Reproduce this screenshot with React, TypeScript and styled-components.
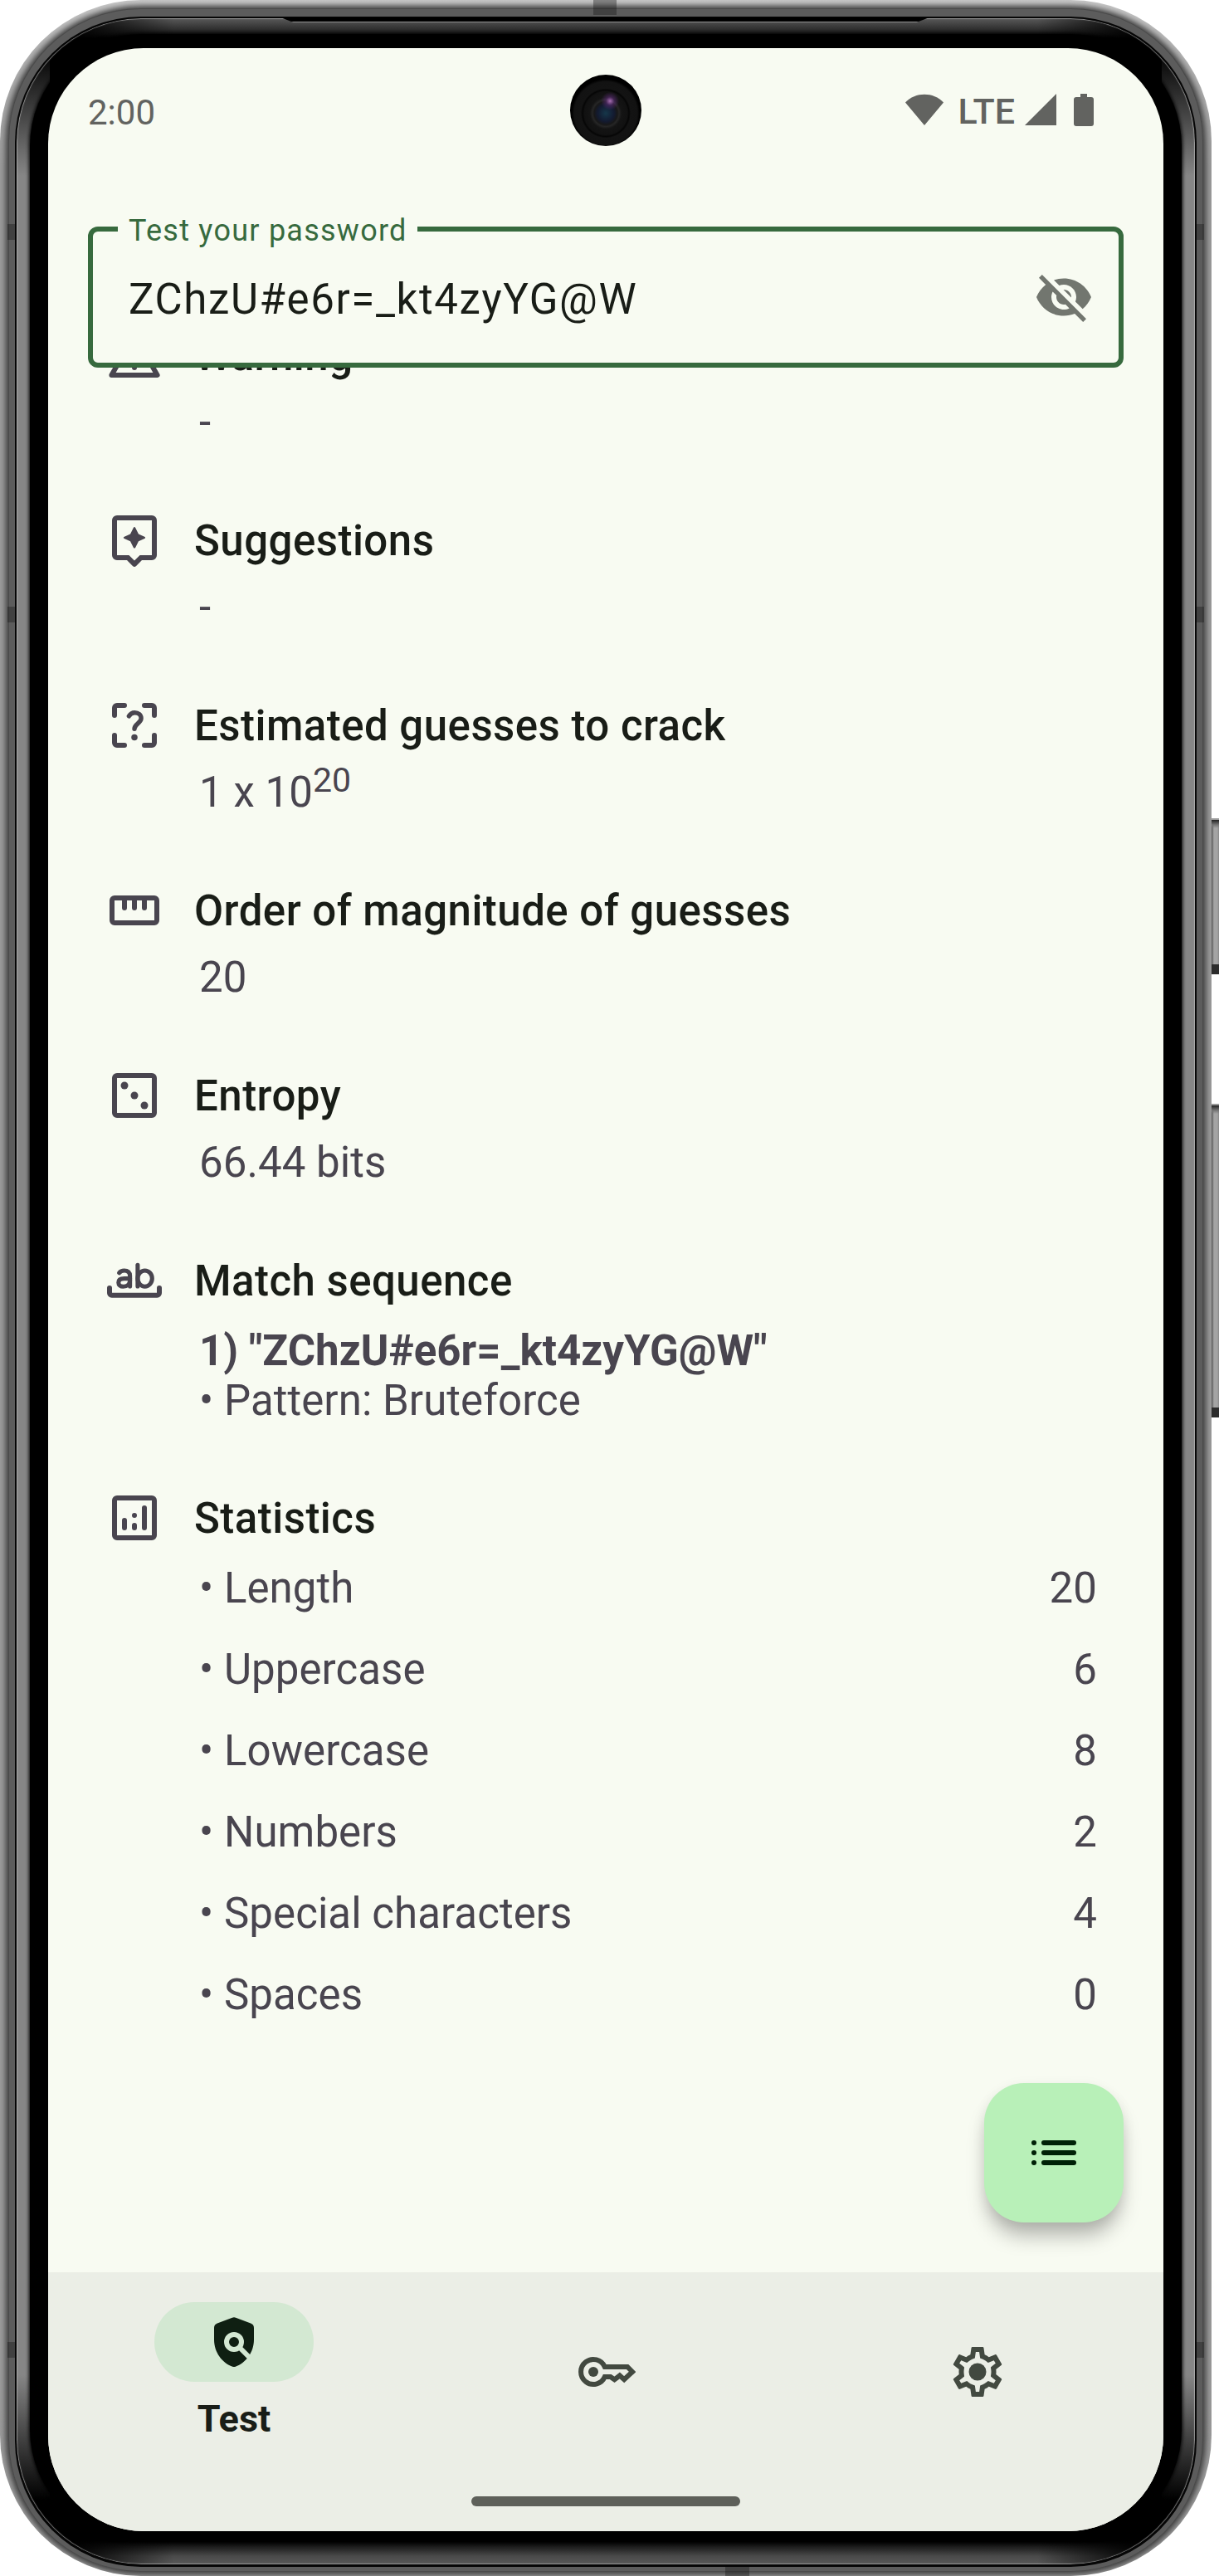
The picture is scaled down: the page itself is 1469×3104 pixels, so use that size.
import React from "react";
import styled, { createGlobalStyle } from "styled-components";

const GlobalStyle = createGlobalStyle`
  body { margin: 0; background: #fff; }
  * { box-sizing: border-box; }
`;

const surface = "#f8fbf2";
const muted = "#49454f";

/* ---------- device ---------- */

const Stage = styled.div`
  position: relative;
  width: 1469px;
  height: 3104px;
  overflow: hidden;
  font-family: Roboto, "Noto Sans", sans-serif;
`;

const Rim = styled.div`
  position: relative;
  width: 1460px;
  height: 3104px;
  padding: 10px 10px 5px;
  border-radius: 170px;
  overflow: hidden;
  background: linear-gradient(180deg, #c8c8c8 0, #b4b4b4 60px, #9c9c9c 200px, #9c9c9c 2900px, #a0a0a0 100%);
`;

const Band = styled.div`
  height: 100%;
  padding: 10px 8px 6px;
  border-radius: 160px;
  background: #5c5c5c;
  box-shadow: 0 0 7px 3px #3c3c3c, inset 0 0 0 1px #4a4a4a;
`;

const Gap = styled.div`
  height: 100%;
  padding: 2px 2px 3px;
  border-radius: 152px;
  background: #060606;
`;

const Chrome = styled.div`
  height: 100%;
  padding: 19px 16px 28px;
  border-radius: 150px;
  background:
    linear-gradient(180deg, transparent 40px, #868686 190px, #868686 2840px, transparent 2990px) left / 40px 100% no-repeat,
    linear-gradient(180deg, transparent 40px, #868686 190px, #868686 2840px, transparent 2990px) right / 40px 100% no-repeat,
    linear-gradient(90deg, #000 60px, transparent 190px, transparent 1230px, #000 1360px),
    linear-gradient(180deg, #5a5a5a, #1c1c1c 19px, #000 24px) center top / 100% 24px no-repeat,
    linear-gradient(0deg, #585858, #4a4a4a 10px, #000 28px) center bottom / 100% 30px no-repeat,
    #000;
  box-shadow: inset 0 0 1px 1px rgba(190, 190, 190, 0.65);
`;

const Bezel = styled.div`
  height: 100%;
  padding: 17px 22px 12px;
  border-radius: 135px;
  background: #000;
  box-shadow: 0 0 4px 1px #000;
`;

const Screen = styled.div`
  position: relative;
  display: flex;
  flex-direction: column;
  height: 100%;
  border-radius: 115px;
  overflow: hidden;
  background: ${surface};
`;

const SpeakerSlot = styled.div`
  position: absolute;
  left: 338px;
  top: 21px;
  width: 782px;
  height: 6px;
  background: linear-gradient(180deg, #000 5px, #909090 5px);
  clip-path: polygon(0 0, 100% 0, 98% 100%, 2% 100%);
`;

const AntennaMark = styled.div<{ $x: number; $y: number; $w: number; $h: number }>`
  position: absolute;
  left: ${(p) => p.$x}px;
  top: ${(p) => p.$y}px;
  width: ${(p) => p.$w}px;
  height: ${(p) => p.$h}px;
  background: rgba(20, 20, 20, 0.38);
`;

const SideKey = styled.div<{ $y: number; $h: number }>`
  position: absolute;
  left: 1460px;
  top: ${(p) => p.$y}px;
  width: 9px;
  height: ${(p) => p.$h}px;
  border-top: 2px solid #9a9a9a;
  border-bottom: 12px solid #2c2c2c;
  background: linear-gradient(180deg, #222 0, #777 6px, transparent 10px),
    linear-gradient(90deg, #555, #a4a4a4 3px, #a4a4a4 7px, #888);
`;

/* ---------- status bar ---------- */

const StatusBar = styled.header`
  display: flex;
  align-items: center;
  justify-content: space-between;
  height: 74px;
  margin-top: 38px;
  padding: 0 84px 0 48px;
  color: #626360;
`;

const Clock = styled.span`
  font-size: 42px;
  line-height: 74px;
  padding-top: 5px;
`;

const StatusIcons = styled.div`
  display: flex;
  align-items: center;
`;

const NetworkType = styled.span`
  margin: 0 12px 0 18px;
  padding-top: 1px;
  font-size: 43px;
  font-weight: 500;
  line-height: 74px;
`;

const CameraLens = styled.div`
  position: absolute;
  left: 629px;
  top: 32px;
  width: 86px;
  height: 86px;
  border-radius: 50%;
  background:
    radial-gradient(circle at 56% 37%, rgba(200, 130, 215, 0.8) 0, rgba(90, 45, 115, 0.6) 5px, transparent 11px),
    radial-gradient(circle at 50% 54%, #16374a 0, #131a30 10px, #181818 14px, #262626 16px, #141414 19px, #111 26px, #050505 28px, #131313 30px, #121212 38px, #000 41px);
`;

/* ---------- password field ---------- */

const Field = styled.div`
  position: relative;
  display: flex;
  flex: none;
  align-items: center;
  justify-content: space-between;
  height: 170px;
  margin: 103px 48px 0;
  padding: 0 30px 0 43px;
  border: 6px solid #376a3e;
  border-radius: 12px;
`;

const FieldLabel = styled.label`
  position: absolute;
  left: 30px;
  top: -25px;
  padding: 0 12px 0 13px;
  background: ${surface};
  color: #376a3e;
  font-size: 36px;
  line-height: 48px;
  letter-spacing: 1.25px;
  white-space: nowrap;
`;

const FieldValue = styled.span`
  padding-top: 6px;
  color: #191d17;
  font-size: 51px;
  line-height: 72px;
  letter-spacing: 1.6px;
  white-space: nowrap;
`;

/* ---------- result list ---------- */

const Results = styled.main`
  flex: 1;
  min-height: 0;
  overflow: hidden;
  padding: 0 80px 0 68px;
`;

const ScrolledList = styled.div`
  margin-top: -51px;
`;

const Section = styled.section<{ $height: number }>`
  height: ${(p) => p.$height}px;
`;

const SectionHead = styled.div`
  display: flex;
  align-items: center;
  gap: 36px;
  height: 72px;
  color: ${muted};
`;

const SectionTitle = styled.h2`
  margin: 0;
  padding-top: 2px;
  color: #191d17;
  font-size: 51px;
  font-weight: 500;
  line-height: 72px;
  letter-spacing: 0.47px;
  white-space: nowrap;
`;

const SectionBody = styled.div<{ $gap?: number }>`
  padding: ${(p) => p.$gap ?? 15}px 0 0 114px;
  color: ${muted};
  font-size: 51px;
  line-height: 60px;
  letter-spacing: 0.06px;
`;

const Exponent = styled.span`
  position: relative;
  top: -18px;
  font-size: 41px;
  line-height: 1;
`;

const Strong = styled.div`
  font-weight: 700;
`;

const StatRow = styled.div`
  display: flex;
  justify-content: space-between;
  height: 98px;
`;

/* ---------- floating button and navigation ---------- */

const Fab = styled.button`
  position: absolute;
  left: 1128px;
  top: 2452px;
  display: grid;
  place-items: center;
  width: 168px;
  height: 168px;
  padding: 0;
  border: 0;
  border-radius: 48px;
  background: #b8f0b8;
  color: #002107;
  box-shadow: 0 20px 24px -4px rgba(0, 0, 0, 0.27), 0 4px 16px rgba(0, 0, 0, 0.07);
`;

const NavBar = styled.nav`
  flex: none;
  display: flex;
  flex-direction: column;
  align-items: center;
  height: 312px;
  background: #ebeee6;
`;

const NavItems = styled.div`
  display: flex;
  width: 100%;
  height: 240px;
`;

const NavItem = styled.div`
  flex: 1;
  display: flex;
  flex-direction: column;
  align-items: center;
  justify-content: center;
  color: #424940;
`;

const ActivePill = styled.div`
  display: grid;
  place-items: center;
  width: 192px;
  height: 96px;
  border-radius: 48px;
  background: #d3e8d2;
  color: #0f1f12;
`;

const NavLabel = styled.span`
  padding-top: 15px;
  margin-bottom: -3px;
  color: #191d17;
  font-size: 45px;
  font-weight: 700;
  line-height: 60px;
`;

const HomeHandle = styled.div`
  width: 324px;
  height: 12px;
  margin-top: 30px;
  border-radius: 6px;
  background: #5e605a;
`;

/* ---------- icons ---------- */

const IconSvg = styled.svg`
  flex: none;
  width: 72px;
  height: 72px;
`;

const Glyph = ({ children }: { children: React.ReactNode }) => (
  <IconSvg viewBox="0 0 24 24" fill="none" stroke="currentColor" strokeWidth="2" strokeLinecap="round" strokeLinejoin="round">
    {children}
  </IconSvg>
);

const Box = () => (
  <path stroke="none" fill="currentColor" fillRule="evenodd" d="M5 3h14a2 2 0 0 1 2 2v14a2 2 0 0 1-2 2H5a2 2 0 0 1-2-2V5a2 2 0 0 1 2-2ZM5 5v14h14V5Z" />
);

const WarningIcon = () => (
  <Glyph>
    <path d="M2.8 20 12 4l9.2 16Z" />
    <path d="M12 11v3" />
    <circle cx="12" cy="17" r="1" fill="currentColor" stroke="none" />
  </Glyph>
);

const AssistantIcon = () => (
  <Glyph>
    <path stroke="none" fill="currentColor" fillRule="evenodd" d="M5 2h14a2 2 0 0 1 2 2v14a2 2 0 0 1-2 2h-4l-2.3 2.3a1 1 0 0 1-1.4 0L9 20H5a2 2 0 0 1-2-2V4a2 2 0 0 1 2-2ZM5 4v14h4.8l2.2 2.2 2.2-2.2H19V4Z" />
    <path stroke="none" fill="currentColor" d="M11.6 7c.15-.4.65-.4.8 0l1.25 2.5 2.4 1.05c.45.2.45.6 0 .8l-2.4 1.05-1.25 2.5c-.15.4-.65.4-.8 0l-1.25-2.5-2.4-1.05c-.45-.2-.45-.6 0-.8l2.4-1.05Z" />
  </Glyph>
);

const GuessIcon = () => (
  <Glyph>
    <path d="M8 4H5a1 1 0 0 0-1 1v3M16 4h3a1 1 0 0 1 1 1v3M8 20H5a1 1 0 0 1-1-1v-3M16 20h3a1 1 0 0 0 1-1v-3" />
    <path strokeWidth="1.8" d="M9.8 8.3C10.3 7.4 11.1 6.9 12.1 6.9c1.5 0 2.6.9 2.6 2.3 0 1.9-2.7 2.3-2.7 4.2" />
    <circle cx="12" cy="16.8" r="1.25" fill="currentColor" stroke="none" />
  </Glyph>
);

const RulerIcon = () => (
  <Glyph>
    <path stroke="none" fill="currentColor" fillRule="evenodd" d="M4 6h16a2 2 0 0 1 2 2v8a2 2 0 0 1-2 2H4a2 2 0 0 1-2-2V8a2 2 0 0 1 2-2ZM4 8v8h16V8Z" />
    <path d="M8 8v3M12 8v3M16 8v3" />
  </Glyph>
);

const DiceIcon = () => (
  <Glyph>
    <Box />
    <g fill="currentColor" stroke="none">
      <circle cx="8" cy="8" r="1.5" />
      <circle cx="12" cy="12" r="1.5" />
      <circle cx="16" cy="16" r="1.5" />
    </g>
  </Glyph>
);

const WordIcon = () => (
  <Glyph>
    <path d="M2 15v2a.9.9 0 0 0 .9.9h18.2A.9.9 0 0 0 22 17v-2" />
    <g strokeWidth="1.7">
      <path d="M5.9 8.9c.5-.7 1.2-.9 2-.9 1.5 0 2.3.8 2.3 2.1v4.2" />
      <path d="M10.2 11.2H7.9c-1.4 0-2.3.5-2.3 1.6 0 1 .8 1.6 1.9 1.6 1.5 0 2.7-1 2.7-2.6" />
      <path d="M13.3 5.8v8.5" />
      <ellipse cx="16.2" cy="11.2" rx="2.9" ry="3.2" />
    </g>
  </Glyph>
);

const StatsIcon = () => (
  <Glyph>
    <Box />
    <path d="M8 13v3M12 15v1M16 8v8" />
    <circle cx="12" cy="11" r="1" fill="currentColor" stroke="none" />
  </Glyph>
);

const HiddenIcon = () => (
  <IconSvg viewBox="0 0 24 24" fill="#72766f">
    <path d="M12 7c2.76 0 5 2.24 5 5 0 .65-.13 1.26-.36 1.83l2.92 2.92c1.51-1.26 2.7-2.89 3.43-4.75-1.73-4.39-6-7.5-11-7.5-1.4 0-2.74.25-3.98.7l2.16 2.16C10.74 7.13 11.35 7 12 7zM2 4.27l2.28 2.28.46.46C3.08 8.3 1.78 10.02 1 12c1.73 4.39 6 7.5 11 7.5 1.55 0 3.03-.3 4.38-.84l.42.42L19.73 22 21 20.73 3.27 3 2 4.27zM7.53 9.8l1.55 1.55c-.05.21-.08.43-.08.65 0 1.66 1.34 3 3 3 .22 0 .44-.03.65-.08l1.55 1.55c-.67.33-1.41.53-2.2.53-2.76 0-5-2.24-5-5 0-.79.2-1.53.53-2.2zm4.31-.78l3.15 3.15.02-.16c0-1.66-1.34-3-3-3l-.17.01z" />
  </IconSvg>
);

const ListIcon = () => (
  <Glyph>
    <path d="M8 8h12M8 12h12M8 16h12M4 8h.01M4 12h.01M4 16h.01" />
  </Glyph>
);

const PolicyIcon = () => (
  <Glyph>
    <path stroke="none" fill="currentColor" d="M11.3 2.25a2 2 0 0 1 1.4 0l6 2.25A2 2 0 0 1 20 6.4v4.7c0 5.1-3.3 9.4-7.4 10.8a2 2 0 0 1-1.2 0C7.3 20.5 4 16.2 4 11.1V6.4a2 2 0 0 1 1.3-1.9Z" />
    <g stroke="#d3e8d2" strokeLinecap="butt">
      <circle cx="12" cy="12" r="3" />
      <path d="m14 14 5 5" />
    </g>
  </Glyph>
);

const KeyIcon = () => (
  <Glyph>
    <path strokeLinejoin="miter" d="M11.6 10h9.1l2 2-3.3 3.1-1.8-1.6-2.1 1.6-1.6-1.1h-2.3A5 5 0 1 1 11.6 10Z" />
    <circle cx="7" cy="12" r="2" fill="currentColor" stroke="none" />
  </Glyph>
);

const SettingsIcon = () => (
  <Glyph>
    <path
      stroke="none"
      fill="currentColor"
      d="M19.43 12.98c.04-.32.07-.64.07-.98 0-.34-.03-.66-.07-.98l2.11-1.65c.19-.15.24-.42.12-.64l-2-3.46c-.09-.16-.26-.25-.44-.25-.06 0-.12.01-.17.03l-2.49 1c-.52-.4-1.08-.73-1.69-.98l-.38-2.65C14.46 2.18 14.25 2 14 2h-4c-.25 0-.46.18-.49.42l-.38 2.65c-.61.25-1.17.59-1.69.98l-2.49-1c-.06-.02-.12-.03-.18-.03-.17 0-.34.09-.43.25l-2 3.46c-.13.22-.07.49.12.64l2.11 1.65c-.04.32-.07.65-.07.98 0 .33.03.66.07.98l-2.11 1.65c-.19.15-.24.42-.12.64l2 3.46c.09.16.26.25.44.25.06 0 .12-.01.17-.03l2.49-1c.52.4 1.08.73 1.69.98l.38 2.65c.03.24.24.42.49.42h4c.25 0 .46-.18.49-.42l.38-2.65c.61-.25 1.17-.59 1.69-.98l2.49 1c.06.02.12.03.18.03.17 0 .34-.09.43-.25l2-3.46c.12-.22.07-.49-.12-.64l-2.11-1.65zm-1.98-1.71c.04.31.05.52.05.73 0 .21-.02.43-.05.73l-.14 1.13.89.7 1.08.84-.7 1.21-1.27-.51-1.04-.42-.9.68c-.43.32-.84.56-1.25.73l-1.06.43-.16 1.13-.2 1.35h-1.4l-.19-1.35-.16-1.13-1.06-.43c-.43-.18-.83-.41-1.23-.71l-.91-.7-1.06.43-1.27.51-.7-1.21 1.08-.84.89-.7-.14-1.13c-.03-.31-.05-.54-.05-.74s.02-.43.05-.73l.14-1.13-.89-.7-1.08-.84.7-1.21 1.27.51 1.04.42.9-.68c.43-.32.84-.56 1.25-.73l1.06-.43.16-1.13.2-1.35h1.39l.19 1.35.16 1.13 1.06.43c.43.18.83.41 1.23.71l.91.7 1.06-.43 1.27-.51.7 1.21-1.07.85-.89.7.14 1.13z"
    />
    <circle cx="12" cy="12" r="3.5" fill="currentColor" stroke="none" />
  </Glyph>
);

const WifiIcon = () => (
  <svg width="46" height="40" viewBox="0 0 46 40" fill="currentColor">
    <path d="M0 10.500C12 -2.500 34 -2.500 46 10.500L23 38Z" />
  </svg>
);

const SignalIcon = () => (
  <svg width="38" height="40" viewBox="0 0 38 40" fill="currentColor">
    <path d="M0 38 38 0v38Z" />
  </svg>
);

const BatterySvg = styled.svg`
  width: 24px;
  height: 40px;
  margin-left: 21px;
`;

const BatteryIcon = () => (
  <BatterySvg viewBox="0 0 24 40" fill="currentColor">
    <path d="M8 0h8v4h5a3 3 0 0 1 3 3v29a3 3 0 0 1-3 3H3a3 3 0 0 1-3-3V7a3 3 0 0 1 3-3h5Z" />
  </BatterySvg>
);

/* ---------- data ---------- */

const stats: [string, number][] = [
  ["Length", 20],
  ["Uppercase", 6],
  ["Lowercase", 8],
  ["Numbers", 2],
  ["Special characters", 4],
  ["Spaces", 0],
];

const sections: { title: string; icon: React.ReactNode; height: number; gap?: number; body: React.ReactNode }[] = [
  { title: "Warning", icon: <WarningIcon />, height: 223, body: "-" },
  { title: "Suggestions", icon: <AssistantIcon />, height: 223, body: "-" },
  { title: "Estimated guesses to crack", icon: <GuessIcon />, height: 223, body: <>1 x 10<Exponent>20</Exponent></> },
  { title: "Order of magnitude of guesses", icon: <RulerIcon />, height: 223, body: "20" },
  { title: "Entropy", icon: <DiceIcon />, height: 223, body: "66.44 bits" },
  {
    title: "Match sequence",
    icon: <WordIcon />,
    height: 286,
    gap: 19,
    body: (
      <>
        <Strong>1) "ZChzU#e6r=_kt4zyYG@W"</Strong>
        <div>• Pattern: Bruteforce</div>
      </>
    ),
  },
  {
    title: "Statistics",
    icon: <StatsIcon />,
    height: 700,
    gap: 19,
    body: stats.map(([name, count]) => (
      <StatRow key={name}>
        <span>• {name}</span>
        <span>{count}</span>
      </StatRow>
    )),
  },
];

export default function App() {
  return (
    <Stage>
      <GlobalStyle />
      <Rim>
        <Band>
          <Gap>
            <Chrome>
              <Bezel>
                <Screen>
                  <StatusBar>
                    <Clock>2:00</Clock>
                    <StatusIcons>
                      <WifiIcon />
                      <NetworkType>LTE</NetworkType>
                      <SignalIcon />
                      <BatteryIcon />
                    </StatusIcons>
                  </StatusBar>
                  <CameraLens />
                  <Field>
                    <FieldLabel>Test your password</FieldLabel>
                    <FieldValue>ZChzU#e6r=_kt4zyYG@W</FieldValue>
                    <HiddenIcon />
                  </Field>
                  <Results>
                    <ScrolledList>
                      {sections.map((s) => (
                        <Section key={s.title} $height={s.height}>
                          <SectionHead>
                            {s.icon}
                            <SectionTitle>{s.title}</SectionTitle>
                          </SectionHead>
                          <SectionBody $gap={s.gap}>{s.body}</SectionBody>
                        </Section>
                      ))}
                    </ScrolledList>
                  </Results>
                  <Fab aria-label="History">
                    <ListIcon />
                  </Fab>
                  <NavBar>
                    <NavItems>
                      <NavItem>
                        <ActivePill>
                          <PolicyIcon />
                        </ActivePill>
                        <NavLabel>Test</NavLabel>
                      </NavItem>
                      <NavItem>
                        <KeyIcon />
                      </NavItem>
                      <NavItem>
                        <SettingsIcon />
                      </NavItem>
                    </NavItems>
                    <HomeHandle />
                  </NavBar>
                </Screen>
              </Bezel>
            </Chrome>
          </Gap>
        </Band>
        <SpeakerSlot />
        <AntennaMark $x={715} $y={0} $w={28} $h={18} />
        <AntennaMark $x={874} $y={3093} $w={29} $h={11} />
        {[270, 731, 2822].map((y) => (
          <React.Fragment key={y}>
            <AntennaMark $x={9} $y={y} $w={9} $h={19} />
            <AntennaMark $x={1442} $y={y} $w={9} $h={19} />
          </React.Fragment>
        ))}
      </Rim>
      <SideKey $y={986} $h={188} />
      <SideKey $y={1330} $h={378} />
    </Stage>
  );
}
